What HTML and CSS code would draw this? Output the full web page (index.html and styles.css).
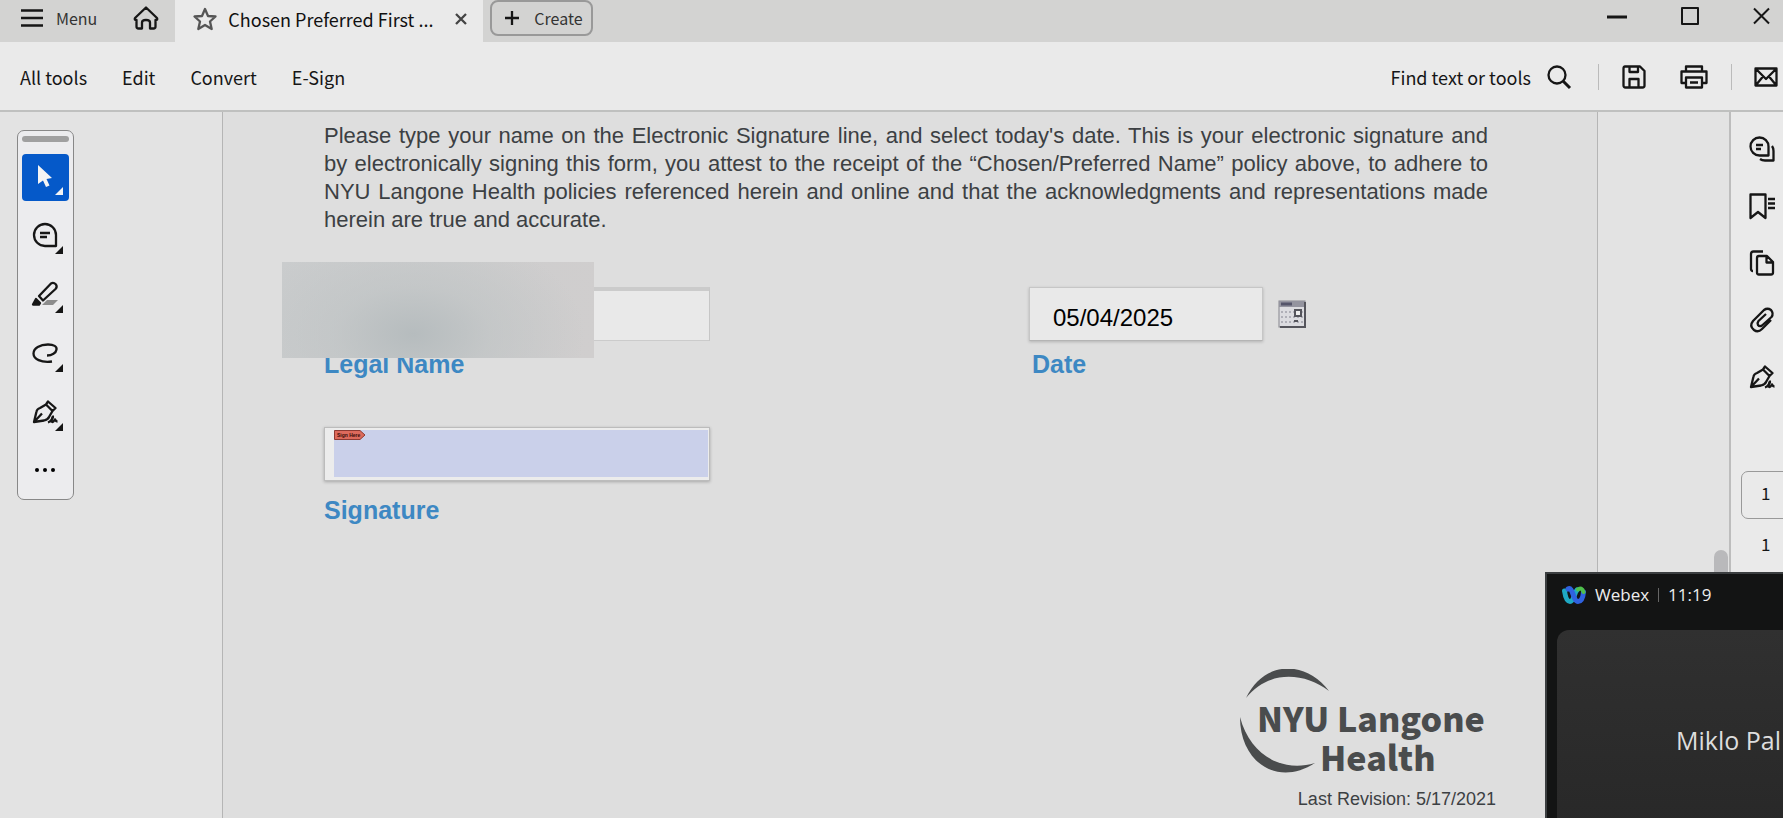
FILE: index.html
```
<!DOCTYPE html>
<html lang="en">
<head>
  <meta charset="UTF-8" />
  <meta name="viewport" content="width=device-width, initial-scale=1.0" />
  <title>Chosen Preferred First Name</title>
  <link rel="stylesheet" href="styles.css">
</head>
<body>
  <!-- shared icon -->
  <svg width="0" height="0" class="defs">
    <symbol id="pen" viewBox="0 0 26 24">
      <path d="M2 22 L4.500 11.500 Q5 9 8 8 L14 4.500 L20.500 11 L17 17 Q16 19.500 12 20.500 Z M2 22 L10 13.500 M14 4.500 L16 1.500 L23.500 8 L20.500 11" />
      <path d="M16 22.500 C19 21.500 21.500 17.500 21 16.500 C20 17 19 22 20.500 22 C22 22 22.500 19.500 23 19.500 C23.500 19.500 23 21.500 25.500 21.500" />
    </symbol>
  </svg>

  <header class="titlebar">
    <button class="menu-btn">
      <svg class="icon" width="22" height="18" viewBox="0 0 22 18"><path d="M0 1.500H22M0 9H22M0 16.500H22" /></svg>
      Menu
    </button>
    <button class="home-btn" aria-label="Home">
      <svg class="icon" width="26" height="24" viewBox="0 0 26 24"><path d="M2 12 L13 1.500 L24 12 Q25 14 22.500 14 V20.500 Q22.500 22.500 20.500 22.500 H17 V16.500 Q17 14 13 14 Q9 14 9 16.500 V22.500 H5.500 Q3.500 22.500 3.500 20.500 V14 Q1 14 2 12 Z" /></svg>
    </button>
    <div class="tab">
      <svg class="icon star" width="24" height="24" viewBox="0 0 24 24"><path d="M12 2 L15 9 L22.500 9.500 L17 14.500 L18.700 22 L12 18 L5.300 22 L7 14.500 L1.500 9.500 L9 9 Z" /></svg>
      <span class="tab-title">Chosen Preferred First ...</span>
      <button class="tab-close" aria-label="Close tab">
        <svg class="icon" width="12" height="12" viewBox="0 0 12 12"><path d="M1 1 L11 11 M11 1 L1 11" /></svg>
      </button>
    </div>
    <button class="create-btn">
      <svg class="icon" width="16" height="16" viewBox="0 0 16 16"><path d="M8 1V15M1 8H15" /></svg>
      Create
    </button>
    <div class="window-controls">
      <button aria-label="Minimize"><svg class="icon" width="20" height="18" viewBox="0 0 20 18"><path d="M0 10H20" stroke-width="3" /></svg></button>
      <button aria-label="Maximize"><svg class="icon" width="18" height="18" viewBox="0 0 18 18"><path d="M1 1H17V17H1Z" /></svg></button>
      <button aria-label="Close"><svg class="icon" width="17" height="18" viewBox="0 0 17 18"><path d="M1 1.500 L16 16.500 M16 1.500 L1 16.500" /></svg></button>
    </div>
  </header>

  <nav class="toolbar">
    <a href="#">All tools</a>
    <a href="#">Edit</a>
    <a href="#">Convert</a>
    <a href="#">E-Sign</a>
    <div class="toolbar-right">
      <button class="find-btn">
        Find text or tools
        <svg class="icon" width="24" height="24" viewBox="0 0 24 24"><circle cx="10" cy="10" r="8.500" /><path d="M16 16 L23 23" stroke-width="3" /></svg>
      </button>
      <span class="divider"></span>
      <button class="save-btn" aria-label="Save">
        <svg class="icon" width="24" height="24" viewBox="0 0 24 24"><path d="M3 1.500 H18 L22.500 6 V20.500 Q22.500 22.500 20.500 22.500 H3.500 Q1.500 22.500 1.500 20.500 V3.500 Q1.500 1.500 3 1.500 Z M7.500 2 V7 H16 V2 M7.500 22 V14 H16.500 V22" /></svg>
      </button>
      <button class="print-btn" aria-label="Print">
        <svg class="icon" width="28" height="24" viewBox="0 0 28 24"><path d="M6 6.500 V1.500 H22 V6.500 M6 18 H1.500 V6.500 H26.500 V18 H22 M6 12.500 H22 V22.500 H6 Z M10 17.500 H18" /></svg>
      </button>
      <span class="divider"></span>
      <button class="mail-btn" aria-label="Send by email">
        <svg class="icon" width="24" height="20" viewBox="0 0 24 20"><path d="M1.500 1.500 H22.500 V18.500 H1.500 Z M2 2 L12 12 L22 2 M2 18 L9 9.500 M22 18 L15 9.500" /></svg>
      </button>
    </div>
  </nav>

  <main class="workspace">
    <aside class="left-pane">
      <div class="palette">
        <span class="grip"></span>
        <button class="tool active" aria-label="Select">
          <svg width="16" height="22" viewBox="0 0 16 22"><path d="M1 0 L15 13 L9.500 14 L12.500 20.500 L9 22 L6 15.500 L1 19 Z" fill="#f4f4f4" /></svg>
        </button>
        <button class="tool" aria-label="Add comment">
          <svg class="icon" width="26" height="26" viewBox="0 0 26 26"><path d="M24 24 H13 A11 11 0 1 1 24 13 Z M8 11 H18 M8 15 H15" /></svg>
        </button>
        <button class="tool" aria-label="Highlight">
          <svg class="icon" width="26" height="26" viewBox="0 0 26 26"><path d="M15 19 H26 L21 24 H10 Z" fill="#8c8c8c" stroke="none" /><path d="M7 15 L19 2.500 Q21.500 1 24 3.500 Q25.500 6 23.500 8 L11 19.500 Z" /><path d="M4 18 L8 22 L7 23.500 H1 Z" fill="#161616" /></svg>
        </button>
        <button class="tool" aria-label="Draw">
          <svg class="icon" width="26" height="20" viewBox="0 0 26 20"><path d="M20 18.500 C9 20 1.500 16 1.500 10.500 C1.500 5 8 1.500 16 1.500 C22 1.500 25 3.500 24.500 6.500 C24 10 20 12.500 15 12.500" /></svg>
        </button>
        <button class="tool" aria-label="Sign">
          <svg class="icon" width="26" height="24"><use href="#pen" /></svg>
        </button>
        <button class="tool more" aria-label="More tools">
          <svg width="22" height="4" viewBox="0 0 22 4"><circle cx="3" cy="2" r="2" /><circle cx="11" cy="2" r="2" /><circle cx="19" cy="2" r="2" /></svg>
        </button>
      </div>
    </aside>

    <section class="page">
      <p class="statement">
        Please type your name on the Electronic Signature line, and select today's date. This is your electronic signature and<br>
        by electronically signing this form, you attest to the receipt of the “Chosen/Preferred Name” policy above, to adhere to<br>
        NYU Langone Health policies referenced herein and online and that the acknowledgments and representations made
        <span class="last-line">herein are true and accurate.</span>
      </p>
      <form class="fields">
        <div class="field name-field">
          <input type="text" id="legal-name" />
          <label for="legal-name">Legal Name</label>
          <span class="redacted"></span>
        </div>
        <div class="field date-field">
          <div class="date-row">
            <input type="text" id="date" value="05/04/2025" />
            <button type="button" class="calendar-btn" aria-label="Pick a date">
              <svg width="28" height="28" viewBox="0 0 28 28">
                <rect x="1" y="1" width="26" height="26" fill="#dcdce0" stroke="#85858d" />
                <path d="M1 1 H27 V7 H1 Z" fill="#94949f" />
                <path d="M3 4 H14" stroke="#55556a" stroke-width="3" />
                <path d="M3 12 H25 M3 17 H25 M3 22 H25" stroke="#b0b0b8" stroke-width="2" stroke-dasharray="2 2" />
                <path d="M27 2 V27 H2" fill="none" stroke="#55555c" stroke-width="2" />
                <rect x="17" y="10" width="6" height="6" fill="#eee" stroke="#55555c" stroke-width="2" />
                <path d="M16 21 H20" stroke="#55555c" stroke-width="2" />
              </svg>
            </button>
          </div>
          <label for="date">Date</label>
        </div>
        <div class="field signature-field">
          <button type="button" id="signature" class="signature-box">
            <span class="sign-area">
              <svg width="32" height="10" viewBox="0 0 32 10"><path d="M0.500 0.500 H26 L31 5 L26 9.500 H0.500 Z" fill="#dd6a5c" stroke="#8d3a32" /><text x="3" y="7" class="tag-text">Sign Here</text></svg>
            </span>
          </button>
          <label for="signature">Signature</label>
        </div>
      </form>
      <footer class="page-footer">
        <div class="logo">
          <svg class="logo-ring" width="90" height="104" viewBox="0 0 90 104">
            <path d="M6 29 C24 -9 66 -9 89 22 C64 3 28 1 6 29 Z" />
            <path d="M0 48 C0 94 38 118 75 94 C42 104 10 86 0 48 Z" />
          </svg>
          <span>NYU Langone</span>
          <span class="logo-second">Health</span>
        </div>
        <small>Last Revision: 5/17/2021</small>
      </footer>
    </section>

    <div class="gutter"><span class="scroll-thumb"></span></div>

    <aside class="right-rail">
      <button aria-label="Comments">
        <svg class="icon" width="26" height="26" viewBox="0 0 26 26"><path d="M19.500 19.500 H10.500 A9 9 0 1 1 19.500 10.500 Z M7 9 H14 M7 13 H12 M23 10 Q24.500 12 24.500 15 V24.500 H16 Q13 24.500 11 23" /></svg>
      </button>
      <button aria-label="Bookmarks">
        <svg class="icon" width="26" height="26" viewBox="0 0 26 26"><path d="M1.500 1.500 H16.500 V25 L9 19 L1.500 25 Z M19 6 H26 M19 10.500 H26 M19 15 H26" /></svg>
      </button>
      <button aria-label="Pages">
        <svg class="icon" width="26" height="26" viewBox="0 0 26 26"><path d="M4 21 Q2 21 2 19 V4 Q2 1.500 4.500 1.500 H14 M10 6 H18 L24 12 V22.500 Q24 24.500 22 24.500 H10 Q8 24.500 8 22.500 V8 Q8 6 10 6 Z M17.500 6 V12.500 H24" /></svg>
      </button>
      <button aria-label="Attachments">
        <svg class="icon" width="26" height="26" viewBox="0 0 26 26"><path d="M22 13 L13 22 Q9 26 5 23 Q0 19 4 14 L15 3 Q18.500 0.500 22 3 Q25 6.500 22.500 10 L13 18.500 Q10.500 20 9 18 Q8 16 9.500 14 L17 7" /></svg>
      </button>
      <button aria-label="Signatures">
        <svg class="icon" width="26" height="24"><use href="#pen" /></svg>
      </button>
      <input class="page-input" type="text" value="1" aria-label="Page number" />
      <span class="page-count">1</span>
    </aside>
  </main>

  <section class="webex">
    <div class="webex-head">
      <svg width="24" height="18" viewBox="0 0 24 18" fill="none" stroke-linecap="round">
        <path d="M2.500 5 C3.500 12 5 15.500 8 15.500 C12 15.500 12 7 15 4" stroke="#1fa9c4" stroke-width="5" />
        <path d="M6 3 C11 0 11 15.500 16 15.500 C19.500 15.500 21 12 21.500 6" stroke="#2f62e0" stroke-width="5" />
        <path d="M16 3.500 C18 1.500 20.500 2.500 21.500 6" stroke="#4fc04c" stroke-width="4" />
      </svg>
      <span>Webex</span>
      <span class="webex-divider"></span>
      <span>11:19</span>
    </div>
    <div class="webex-tile">Miklo Pal</div>
  </section>
</body>
</html>
```
FILE: styles.css
```
* { box-sizing: border-box; }
body {
  margin: 0;
  height: 100vh;
  overflow: hidden;
  display: flex;
  flex-direction: column;
  position: relative;
  font-family: "Noto Sans CJK SC", "Open Sans", sans-serif;
  font-size: 18px;
  line-height: 24px;
  color: #161616;
  background: #e3e3e3;
}
button, input { font: inherit; color: inherit; border: none; background: none; padding: 0; }
button { cursor: pointer; display: flex; align-items: center; }
svg { display: block; flex: none; }
.defs { position: absolute; }
.icon {
  fill: none; stroke: #161616; stroke-width: 2.3;
  stroke-linejoin: round; overflow: visible;
}

/* Title bar */
.titlebar { display: flex; height: 42px; background: #d3d3d2; }
.menu-btn { margin-left: 21px; gap: 13px; height: 36px; font-size: 16px; color: #333; }
.home-btn { margin: 0 16px 0 36px; height: 36px; }
.tab { display: flex; align-items: center; width: 308px; padding: 0 16px 4px 18px; background: #eaeaea; }
.star { stroke: #555; }
.tab-title { margin-left: 11px; flex: 1; white-space: nowrap; color: #111; }
.tab-close .icon { stroke: #444; }
.create-btn {
  width: 103px; height: 36px; margin: 0 0 0 7px; padding-left: 12px; gap: 14px;
  border: 2px solid #999; border-radius: 8px; font-size: 16px; color: #333;
}
.window-controls { display: flex; align-items: center; gap: 54px; margin-left: auto; padding: 0 13px 10px 0; }
.window-controls .icon { stroke-width: 2; }

/* Toolbar */
.toolbar {
  display: flex; align-items: center; gap: 35px; height: 70px; padding: 1px 5px 0 20px;
  background: #eaeaea; border-bottom: 2px solid #bfc0bf; white-space: nowrap;
}
.toolbar a { color: #161616; text-decoration: none; }
.toolbar-right { display: flex; align-items: center; margin-left: auto; }
.find-btn { gap: 16px; margin-right: 27px; }
.divider { width: 1px; height: 26px; background: #bbb; }
.save-btn { margin: 0 34px 0 23px; }
.print-btn { margin-right: 23px; }
.mail-btn { margin-left: 22px; }

/* Workspace */
.workspace { display: flex; flex: 1; min-height: 0; }
.left-pane { width: 222px; padding: 18px 17px; }
.palette {
  display: flex; flex-direction: column; align-items: center; gap: 12px;
  width: 57px; height: 370px; padding-top: 5px;
  background: #ececee; border: 1px solid #888; border-radius: 7px;
}
.grip { width: 47px; height: 6px; border-radius: 3px; background: #a0a0a0; }
.tool {
  position: relative; justify-content: center; padding: 0 2px 3px 0;
  width: 47px; height: 47px; border-radius: 4px; flex: none;
}
.tool.active { background: #0559c9; }
.tool::after {
  content: ""; position: absolute; right: 6px; bottom: 6px;
  border-left: 8px solid transparent; border-bottom: 8px solid #161616;
}
.tool.active::after { border-bottom-color: #f4f4f4; }
.tool.more { padding-bottom: 6px; }
.tool.more::after { display: none; }

.page {
  display: flex; flex-direction: column; flex: 1; min-width: 0;
  padding: 10px 101px 0; background: #dedede;
  border-left: 1px solid #b5b5b5; border-right: 1px solid #b5b5b5;
  font-family: "Liberation Sans", sans-serif;
}
.statement {
  margin: 0 8px 53px 0; font-size: 22px; line-height: 28px; color: #3c4043;
  text-align: justify; text-align-last: justify;
}
.last-line { display: block; text-align-last: left; }
.fields { display: grid; grid-template-columns: 1fr 467px; row-gap: 48px; }
.field { position: relative; }
.field label { display: block; margin-top: 8px; font-size: 25px; line-height: 30px; font-weight: bold; color: #3d88c3; }
.field input {
  display: block; width: 234px; height: 54px; padding: 8px 23px 0;
  background: #e9e9e9; font-size: 24px; color: #000;
  border: 1px solid #c6c6c6; border-bottom-color: #b4b4b4;
  box-shadow: 0 1px 3px rgba(0,0,0,0.2);
}
.field.name-field input { width: 386px; border-top: 4px solid #cbcbcb; box-shadow: none; border-bottom-color: #cbcbcb; }
.field.date-field label { padding-left: 3px; }
.redacted {
  position: absolute; left: -42px; top: -25px; width: 312px; height: 96px;
  background:
    radial-gradient(ellipse 55% 110% at 42% 75%, #b6bcbe, rgba(190,195,196,0.6) 45%, transparent),
    linear-gradient(100deg, #cacccd, #d0cece);
}
.date-row { display: flex; align-items: center; gap: 15px; }
.signature-box {
  width: 386px; height: 54px; padding: 2px 1px 3px 9px;
  background: #ececec; border: 1px solid #bcbcbc; box-shadow: 0 1px 3px rgba(0,0,0,0.25);
}
.sign-area { flex: 1; height: 47px; background: #cad0ea; }
.tag-text { font: bold 5px "Liberation Sans", sans-serif; fill: #3a0c08; }
.field.signature-field label { margin-top: 14px; }

.page-footer { margin: auto 0 9px auto; width: 256px; text-align: right; }
.logo {
  position: relative; display: flex; flex-direction: column; text-align: left;
  padding: 29px 0 0 17px; font: 900 34px/39px "Noto Sans CJK SC", "Roboto", sans-serif;
  color: #4a4c4d; white-space: nowrap;
}
.logo-second { padding-left: 63px; }
.logo-ring { position: absolute; left: 0; top: 0; fill: #4a4c4d; }
.page-footer small { display: block; margin-top: 13px; font-size: 18px; line-height: 20px; color: #3c4043; }

.gutter { display: flex; justify-content: flex-end; width: 131px; padding: 438px 1px 0; background: #e3e3e3; }
.scroll-thumb { width: 14px; height: 120px; border-radius: 7px; background: #b9b9bb; }
.right-rail {
  display: flex; flex-direction: column; align-items: flex-start; gap: 31px;
  width: 54px; padding: 24px 0 0 18px; background: #eaeaea; border-left: 2px solid #bdbdbd;
}
.right-rail button { height: 26px; }
.page-input {
  width: 56px; height: 48px; margin: 50px 0 0 -8px; padding: 0 0 6px 19px;
  border: 1px solid #999; border-radius: 7px; font-size: 17px;
}
.page-count { margin: -18px 0 0 12px; font-size: 17px; }

/* Webex call window */
.webex {
  position: absolute; right: 0; bottom: 0; width: 238px; height: 246px;
  padding: 0 0 0 10px; background: #131414; color: #eee;
  border-left: 2px solid #3b3e40; border-top: 2px solid #3b3e40;
  font-family: "Open Sans", sans-serif; overflow: hidden;
}
.webex-head { display: flex; align-items: center; gap: 9px; height: 56px; padding: 0 0 14px 5px; font-size: 17px; }
.webex-divider { width: 1px; height: 14px; background: #666; }
.webex-tile {
  height: 200px; padding: 92px 0 0 119px; white-space: nowrap;
  background: linear-gradient(#303030, #282828); border-radius: 12px 0 0 0;
  font-size: 25px; line-height: 36px; color: #ddd;
}
```
